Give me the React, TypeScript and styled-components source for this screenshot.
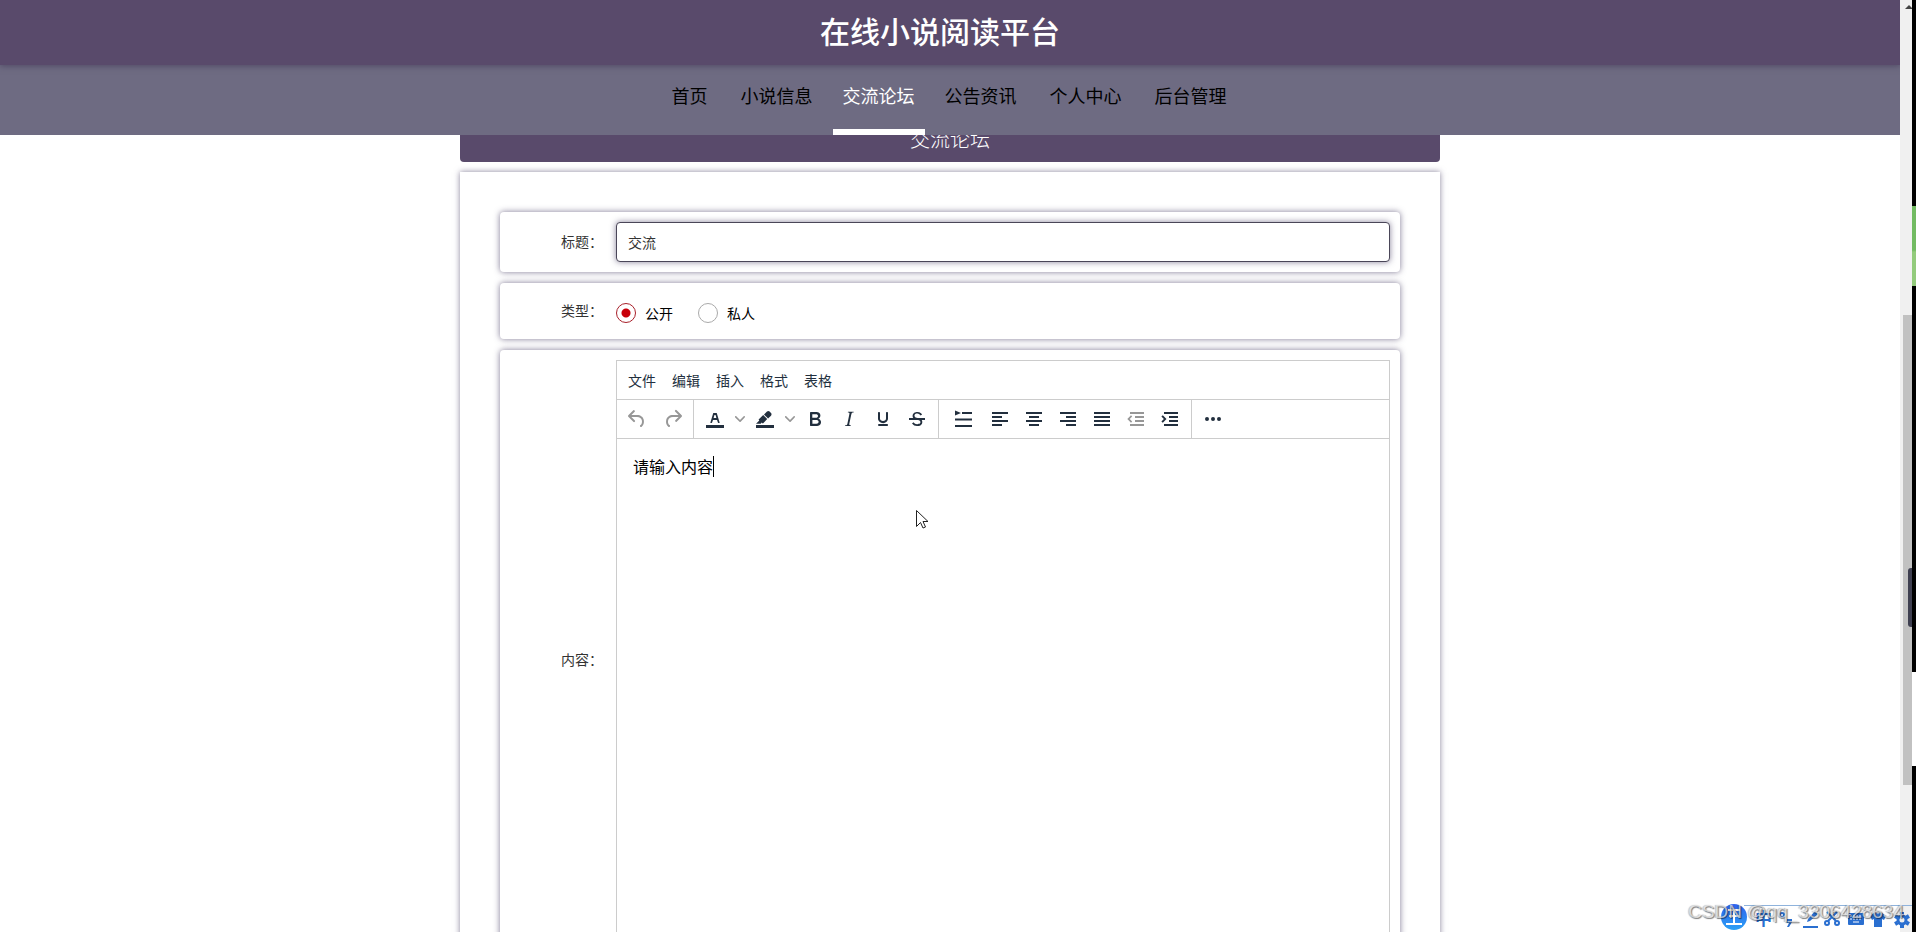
import React from 'react';
import styled, { createGlobalStyle, css } from 'styled-components';

const Global = createGlobalStyle`
  *, *::before, *::after { box-sizing: border-box; }
  html, body, #root { height: 100%; }
  body {
    margin: 0;
    overflow: hidden;
    background: #fff;
    color: #333;
    font: 14px/20px "Noto Sans CJK SC", sans-serif;
  }
  button, input, textarea { font: inherit; color: inherit; }
  button { border: 0; padding: 0; background: none; }
`;

const Window = styled.div`
  display: grid;
  grid-template-columns: minmax(0, 1fr) 12px 4px;
  height: 100vh;
  overflow: hidden;
`;

const Page = styled.div`
  min-width: 0;
  overflow: hidden;
`;

const Header = styled.header`
  position: relative;
  z-index: 3;
  display: flex;
  justify-content: center;
  height: 65px;
  padding-right: 20px;
  background: #594a6b;
  box-shadow: 0 1px 6px rgba(60, 50, 80, 0.6);
`;

const SiteTitle = styled.h1`
  margin: 0;
  color: #fff;
  font-size: 30px;
  font-weight: 500;
  line-height: 60px;
`;

const Nav = styled.nav`
  position: relative;
  z-index: 2;
  display: flex;
  justify-content: center;
  gap: 13px;
  height: 70px;
  padding-right: 2px;
  background: #6e6b82;
`;

const NavLink = styled.a<{ $active?: boolean }>`
  height: 70px;
  padding: 0 10px;
  color: #000;
  font-size: 18px;
  line-height: 60px;
  text-decoration: none;
  ${(p) =>
    p.$active &&
    css`
      margin: 0 -3px;
      color: #fff;
      border-bottom: 6px solid #fff;
    `}
`;

const Main = styled.main`
  width: 980px;
  max-width: 100%;
  margin: -17px auto 0;
`;

const Banner = styled.h2`
  margin: 0 0 10px;
  border-radius: 4px;
  background: #594a6b;
  color: #fff;
  font-family: "Liberation Serif", "Noto Sans CJK SC", serif;
  font-size: 20px;
  font-weight: 300;
  line-height: 44px;
  text-align: center;
`;

const Form = styled.form`
  display: flex;
  flex-direction: column;
  gap: 11px;
  padding: 40px;
  background: #fff;
  box-shadow: 0 0 6px rgba(60, 50, 90, 0.6);
`;

const Row = styled.div`
  display: flex;
  align-items: center;
  min-height: 56px;
  padding: 10px;
  border-radius: 4px;
  background: #fff;
  box-shadow: 0 0 6px rgba(60, 50, 90, 0.65);
`;

const Label = styled.label`
  flex: none;
  width: 106px;
  padding: 0 13px 2px 0;
  text-align: right;
`;

const TextInput = styled.input`
  flex: 1;
  min-width: 0;
  height: 40px;
  padding: 0 11px;
  border: 1px solid #4a4658;
  border-radius: 4px;
  outline: 0;
  background: #fff;
  box-shadow: 0 0 6px rgba(60, 50, 90, 0.6);
`;

const Choices = styled.div`
  display: flex;
  gap: 25px;
  padding-top: 3px;
`;

const Choice = styled.label`
  display: flex;
  align-items: center;
  gap: 9px;
  color: #000;
`;

const Radio = styled.input`
  appearance: none;
  width: 20px;
  height: 20px;
  margin: 0;
  border: 1px solid #aaa;
  border-radius: 50%;
  background: #fff;
  &:checked {
    border-color: #a8202a;
    background: radial-gradient(circle, #c8000a 4px, #fff 5px);
  }
`;

const Editor = styled.div`
  display: flex;
  flex: 1;
  flex-direction: column;
  min-width: 0;
  height: 600px;
  border: 1px solid #ccc;
  background: #fff;
`;

const MenuBar = styled.div`
  display: flex;
  gap: 16px;
  height: 39px;
  padding: 0 11px;
  border-bottom: 1px solid #ccc;
`;

const MenuButton = styled.button`
  color: #222f3e;
`;

const ToolBar = styled.div`
  display: flex;
  height: 39px;
  border-bottom: 1px solid #ccc;
`;

const Group = styled.div<{ $pad?: number; $last?: boolean }>`
  display: flex;
  padding: 0 ${(p) => p.$pad ?? 4}px;
  border-right: ${(p) => (p.$last ? 0 : '1px solid #ccc')};
`;

const Tool = styled.button<{ $width?: number; $dim?: boolean }>`
  display: grid;
  place-items: center;
  width: ${(p) => p.$width ?? 34}px;
  color: ${(p) => (p.$dim ? '#979797' : '#222f3e')};
  svg { display: block; fill: currentColor; }
`;

const Content = styled.textarea`
  flex: 1;
  padding: 15px 16px;
  border: 0;
  outline: 0;
  resize: none;
  color: #000;
  font-size: 16px;
  line-height: 24px;
`;

const EditArea = styled.div`
  position: relative;
  display: flex;
  flex: 1;
`;

const Caret = styled.i`
  position: absolute;
  left: 96px;
  top: 17px;
  width: 1px;
  height: 21px;
  background: #000;
`;

const ScrollTrack = styled.div`
  display: flex;
  flex-direction: column;
  align-items: flex-end;
  background: #f0f0f0;
`;

const ScrollArrow = styled.svg`
  display: block;
  width: 8px;
  height: 10px;
`;

const ScrollThumb = styled.div`
  width: 9px;
  height: 470px;
  margin-top: 305px;
  background: #c1c1c1;
`;

const Edge = styled.div`
  background: linear-gradient(
    #000 206px, #72bb62 206px, #72bb62 250px, #93cb7c 252px, #93cb7c 286px,
    #000 286px, #000 672px, #fff 672px, #fff 766px, #000 766px
  );
`;

const SideTab = styled.div`
  position: absolute;
  z-index: 4;
  right: 4px;
  top: 568px;
  width: 4px;
  height: 59px;
  border-radius: 3px 0 0 3px;
  background: #3e3f50;
`;

const Pointer = styled.svg`
  position: absolute;
  left: 915px;
  top: 509px;
  width: 13px;
  height: 21px;
`;

const Ime = styled.div`
  position: absolute;
  z-index: 5;
  right: 4px;
  bottom: 0;
  width: 192px;
  height: 29px;
  svg { display: block; }
  text {
    fill: #2a6fd0;
    stroke: none;
    font: 700 17px "Noto Sans CJK SC", sans-serif;
  }
`;

const Watermark = styled.div`
  position: absolute;
  z-index: 6;
  right: 12px;
  bottom: 9px;
  color: rgba(240, 240, 240, 0.7);
  font: 19px/22px "Liberation Sans", Arial, sans-serif;
  text-shadow: 1px 1px 1px rgba(0, 0, 0, 0.5), -1px 0 1px rgba(0, 0, 0, 0.25);
`;

const nav = ['首页', '小说信息', '交流论坛', '公告资讯', '个人中心', '后台管理'];
const menus = ['文件', '编辑', '插入', '格式', '表格'];

const icons = {
  undo: 'M6.4 8H12c3.7 0 6.2 2 6.8 5.1.6 2.7-.4 5.6-2.3 6.8a1 1 0 0 1-1-1.8c1.1-.6 1.8-2.7 1.4-4.6-.5-2.1-2.1-3.5-4.9-3.5H6.4l3.3 3.3a1 1 0 1 1-1.4 1.4l-5-5a1 1 0 0 1 0-1.4l5-5a1 1 0 0 1 1.4 1.4L6.4 8Z',
  redo: 'M17.6 10H12c-2.8 0-4.4 1.4-4.9 3.5-.4 2 .3 4 1.4 4.6a1 1 0 1 1-1 1.8c-2-1.2-2.9-4.1-2.3-6.8.6-3 3-5.1 6.8-5.1h5.6l-3.3-3.3a1 1 0 1 1 1.4-1.4l5 5a1 1 0 0 1 0 1.4l-5 5a1 1 0 0 1-1.4-1.4l3.3-3.3Z',
  color: 'M3 18h18v3H3zM8.7 16h-.8a.5.5 0 0 1-.5-.6l2.7-9c.1-.3.3-.4.5-.4h2.8c.2 0 .4.1.5.4l2.7 9a.5.5 0 0 1-.5.6h-.8a.5.5 0 0 1-.4-.4l-.7-2.2c0-.3-.3-.4-.5-.4h-3.4c-.2 0-.4.1-.5.4l-.7 2.2c0 .3-.2.4-.4.4Zm2.6-7.6-.6 2a.5.5 0 0 0 .5.6h1.6a.5.5 0 0 0 .5-.6l-.6-2c0-.3-.3-.4-.5-.4h-.4c-.2 0-.4.1-.5.4Z',
  highlight: 'M3 18h18v3H3zM7.7 16.7H3l3.3-3.3-.7-.8L10.2 8l4 4.1-4 4.2c-.2.2-.6.2-.8 0l-.6-.7-1.1 1.1zm5-7.5L11 7.4l3-2.9a2 2 0 0 1 2.6 0L18 6c.7.7.7 2 0 2.7l-2.9 2.9-1.8-1.8-.5-.6',
  bold: 'M7.8 19c-.3 0-.5 0-.6-.2l-.2-.5V5.7c0-.2 0-.4.2-.5l.6-.2h5c1.5 0 2.7.3 3.5 1 .7.6 1.1 1.4 1.1 2.5a3 3 0 0 1-.6 1.9c-.4.6-1 1-1.6 1.2.4.1.9.3 1.3.6s.8.7 1 1.2c.4.4.5 1 .5 1.6 0 1.3-.4 2.3-1.3 3-.8.7-2.1 1-3.8 1H7.8Zm5-8.3c.6 0 1.2-.1 1.6-.5.4-.3.6-.7.6-1.3 0-1.1-.8-1.7-2.3-1.7H9.3v3.5h3.4Zm.5 6c.7 0 1.3-.1 1.7-.4.4-.4.6-.9.6-1.5s-.2-1-.7-1.4c-.4-.3-1-.4-2-.4H9.4v3.8h4Z',
  italic: 'm16.7 4.7-.1.9h-.3c-.6 0-1 0-1.4.3-.3.3-.4.6-.5 1.1l-2.1 9.8v.6c0 .5.4.8 1.4.8h.2l-.2.8H8l.2-.8h.2c1.1 0 1.8-.5 2-1.5l2-9.8.1-.5c0-.6-.4-.8-1.4-.8h-.3l.2-.9h5.8Z',
  underline: 'M16 5c.6 0 1 .4 1 1v5.5a4 4 0 0 1-.4 1.8l-1 1.4a5.3 5.3 0 0 1-5.5 1 5 5 0 0 1-1.6-1c-.5-.4-.8-.9-1.1-1.4a4 4 0 0 1-.4-1.8V6c0-.6.4-1 1-1s1 .4 1 1v5.5c0 .3 0 .6.2 1l.6.7a3.3 3.3 0 0 0 2.2.8 3.4 3.4 0 0 0 2.2-.8c.3-.2.4-.5.6-.8l.2-.9V6c0-.6.4-1 1-1ZM8 17h8c.6 0 1 .4 1 1s-.4 1-1 1H8a1 1 0 0 1 0-2Z',
  strike: 'M15.6 8.5c-.5-.7-1-1.1-1.3-1.3-.6-.4-1.3-.6-2-.6-2.7 0-2.8 1.7-2.8 2.1 0 1.6 1.8 2 3.2 2.3 4.4.9 4.6 2.8 4.6 3.9 0 1.4-.7 4.1-5 4.1A6.2 6.2 0 0 1 7 16.4l1.5-1.1c.4.6 1.6 2 3.7 2 1.6 0 2.5-.4 3-1.2.4-.8.3-2-.8-2.6-.7-.4-1.6-.7-2.9-1-1-.2-3.9-.8-3.9-3.6C7.6 6 10.3 5 12.4 5c2.9 0 4.2 1.6 4.7 2.4l-1.500 1.100ZM4 11h16v2H4z',
  lineHeight: 'M4 3.5 10 6l-6 2.5zM11 5h10v2H11zM4 11.5h17v2H4zM4 18h17v2H4z',
  left: 'M4 5h16v2H4zM4 9h10v2H4zM4 13h16v2H4zM4 17h10v2H4z',
  center: 'M4 5h16v2H4zM7 9h10v2H7zM4 13h16v2H4zM7 17h10v2H7z',
  right: 'M4 5h16v2H4zM10 9h10v2H10zM4 13h16v2H4zM10 17h10v2H10z',
  justify: 'M4 5h16v2H4zM4 9h16v2H4zM4 13h16v2H4zM4 17h16v2H4z',
  outdent: 'M6 5h14v2H6zM11 9h9v2h-9zM11 13h9v2h-9zM6 17h14v2H6zM8.2 9.5 5.7 12l2.5 2.5-1.2 1.2L3.3 12 7 8.3z',
  indent: 'M6 5h14v2H6zM11 9h9v2h-9zM11 13h9v2h-9zM6 17h14v2H6zM4.800 8.300 8.500 12l-3.700 3.700-1.400-1.200L5.900 12 3.400 9.500z',
  more: 'M6 10a2 2 0 1 0 0 4 2 2 0 0 0 0-4ZM12 10a2 2 0 1 0 0 4 2 2 0 0 0 0-4ZM18 10a2 2 0 1 0 0 4 2 2 0 0 0 0-4Z',
};

const Icon = ({ name }: { name: keyof typeof icons }) => (
  <svg
    width="24"
    height="24"
    viewBox="0 0 24 24"
    fillRule={name === 'strike' ? 'nonzero' : 'evenodd'}
    aria-hidden="true"
  >
    <path d={icons[name]} />
  </svg>
);

const Chevron = ({ label }: { label: string }) => (
  <Tool type="button" $width={16} $dim aria-label={label}>
    <svg width="10" height="10" viewBox="0 0 10 10">
      <path d="M8.7 2.2c.3-.3.8-.3 1 0 .4.4.4.9 0 1.2L5.7 7.8c-.3.3-.9.3-1.2 0L.2 3.4a.8.8 0 0 1 0-1.2c.3-.3.8-.3 1.1 0L5 6l3.7-3.8Z" />
    </svg>
  </Tool>
);

const gearTeeth = [0, 60, 120, 180, 240, 300];

export default function App() {
  return (
    <>
      <Global />
      <Window>
        <Page>
          <Header>
            <SiteTitle>在线小说阅读平台</SiteTitle>
          </Header>
          <Nav>
            {nav.map((item) => (
              <NavLink key={item} href="#" $active={item === '交流论坛'}>{item}</NavLink>
            ))}
          </Nav>
          <Main>
            <Banner>交流论坛</Banner>
            <Form>
              <Row>
                <Label htmlFor="title">标题：</Label>
                <TextInput id="title" defaultValue="交流" />
              </Row>
              <Row role="radiogroup" aria-labelledby="kind">
                <Label as="span" id="kind">类型：</Label>
                <Choices>
                  <Choice><Radio type="radio" name="kind" defaultChecked />公开</Choice>
                  <Choice><Radio type="radio" name="kind" />私人</Choice>
                </Choices>
              </Row>
              <Row>
                <Label htmlFor="content">内容：</Label>
                <Editor>
                  <MenuBar>
                    {menus.map((item) => <MenuButton type="button" key={item}>{item}</MenuButton>)}
                  </MenuBar>
                  <ToolBar>
                    <Group $pad={2}>
                      <Tool type="button" $width={36} $dim aria-label="撤销"><Icon name="undo" /></Tool>
                      <Tool type="button" $width={36} $dim aria-label="重做"><Icon name="redo" /></Tool>
                    </Group>
                    <Group>
                      <Tool type="button" aria-label="文字颜色"><Icon name="color" /></Tool>
                      <Chevron label="选择文字颜色" />
                      <Tool type="button" aria-label="背景色"><Icon name="highlight" /></Tool>
                      <Chevron label="选择背景色" />
                      <Tool type="button" aria-label="粗体"><Icon name="bold" /></Tool>
                      <Tool type="button" aria-label="斜体"><Icon name="italic" /></Tool>
                      <Tool type="button" aria-label="下划线"><Icon name="underline" /></Tool>
                      <Tool type="button" aria-label="删除线"><Icon name="strike" /></Tool>
                    </Group>
                    <Group>
                      <Tool type="button" $width={40} aria-label="行高"><Icon name="lineHeight" /></Tool>
                      <Tool type="button" aria-label="左对齐"><Icon name="left" /></Tool>
                      <Tool type="button" aria-label="居中"><Icon name="center" /></Tool>
                      <Tool type="button" aria-label="右对齐"><Icon name="right" /></Tool>
                      <Tool type="button" aria-label="两端对齐"><Icon name="justify" /></Tool>
                      <Tool type="button" $dim aria-label="减少缩进"><Icon name="outdent" /></Tool>
                      <Tool type="button" aria-label="增加缩进"><Icon name="indent" /></Tool>
                    </Group>
                    <Group $last>
                      <Tool type="button" aria-label="更多"><Icon name="more" /></Tool>
                    </Group>
                  </ToolBar>
                  <EditArea>
                    <Content id="content" defaultValue="请输入内容" />
                    <Caret />
                  </EditArea>
                </Editor>
              </Row>
            </Form>
          </Main>
        </Page>
        <ScrollTrack>
          <ScrollArrow viewBox="0 0 8 10"><path d="M1 9 5 5l3 3v1z" fill="#444" /></ScrollArrow>
          <ScrollThumb />
        </ScrollTrack>
        <Edge />
      </Window>
      <SideTab />
      <Pointer viewBox="0 0 13 21" aria-hidden="true">
        <path d="M1.500 1.500v16l4-4 2.500 5.500 2.500-1-2.500-5.500h5z" fill="#fff" stroke="#222" strokeWidth="1" />
      </Pointer>
      <Ime>
        <svg width="192" height="29" viewBox="0 0 192 29" fill="none" stroke="#2a6fd0" strokeWidth="2" aria-hidden="true">
          <defs>
            <linearGradient id="badge" x1="0" y1="0" x2="0" y2="1">
              <stop offset="0" stopColor="#2f62ee" />
              <stop offset="1" stopColor="#2ba0f5" />
            </linearGradient>
          </defs>
          <path d="M24 2.5h168" stroke="#8fb3dc" strokeWidth="1" />
          <circle cx="14" cy="14" r="13" fill="url(#badge)" stroke="none" />
          <path d="M8 7h12M14 7v13M9 13h10M6 21h16" stroke="#fff" />
          <text x="35" y="22">中</text>
          <circle cx="62" cy="12" r="2" />
          <path d="M67 16h5v3l-3 5h-2l2-4h-2z" fill="#2a6fd0" stroke="none" />
          <path d="M83 24h15" />
          <path d="m87 19 1-3 7-8 3 3-8 7z" fill="#2a6fd0" stroke="none" />
          <path d="m107 9 9 9M117 9l-9 9" />
          <circle cx="107" cy="20" r="2" /><circle cx="117" cy="20" r="2" />
          <rect x="128" y="10" width="16" height="12" rx="1" fill="#2a6fd0" stroke="none" />
          <path d="M130 13h12M130 16h12" stroke="#fff" strokeDasharray="2 1" strokeWidth="1" />
          <path d="M133 19h6" stroke="#fff" strokeWidth="1" />
          <path d="m150 13 5-4c2 2 4 2 6 0l5 4-2 4-2-1v8h-8v-8l-2 1z" fill="#2a6fd0" stroke="none" />
          <circle cx="182" cy="17" r="4" strokeWidth="3" />
          {gearTeeth.map((angle) => (
            <path key={angle} d="M182 12V9" strokeWidth="4" transform={`rotate(${angle} 182 17)`} />
          ))}
        </svg>
      </Ime>
      <Watermark>CSDN @qq_3306428634</Watermark>
    </>
  );
}
